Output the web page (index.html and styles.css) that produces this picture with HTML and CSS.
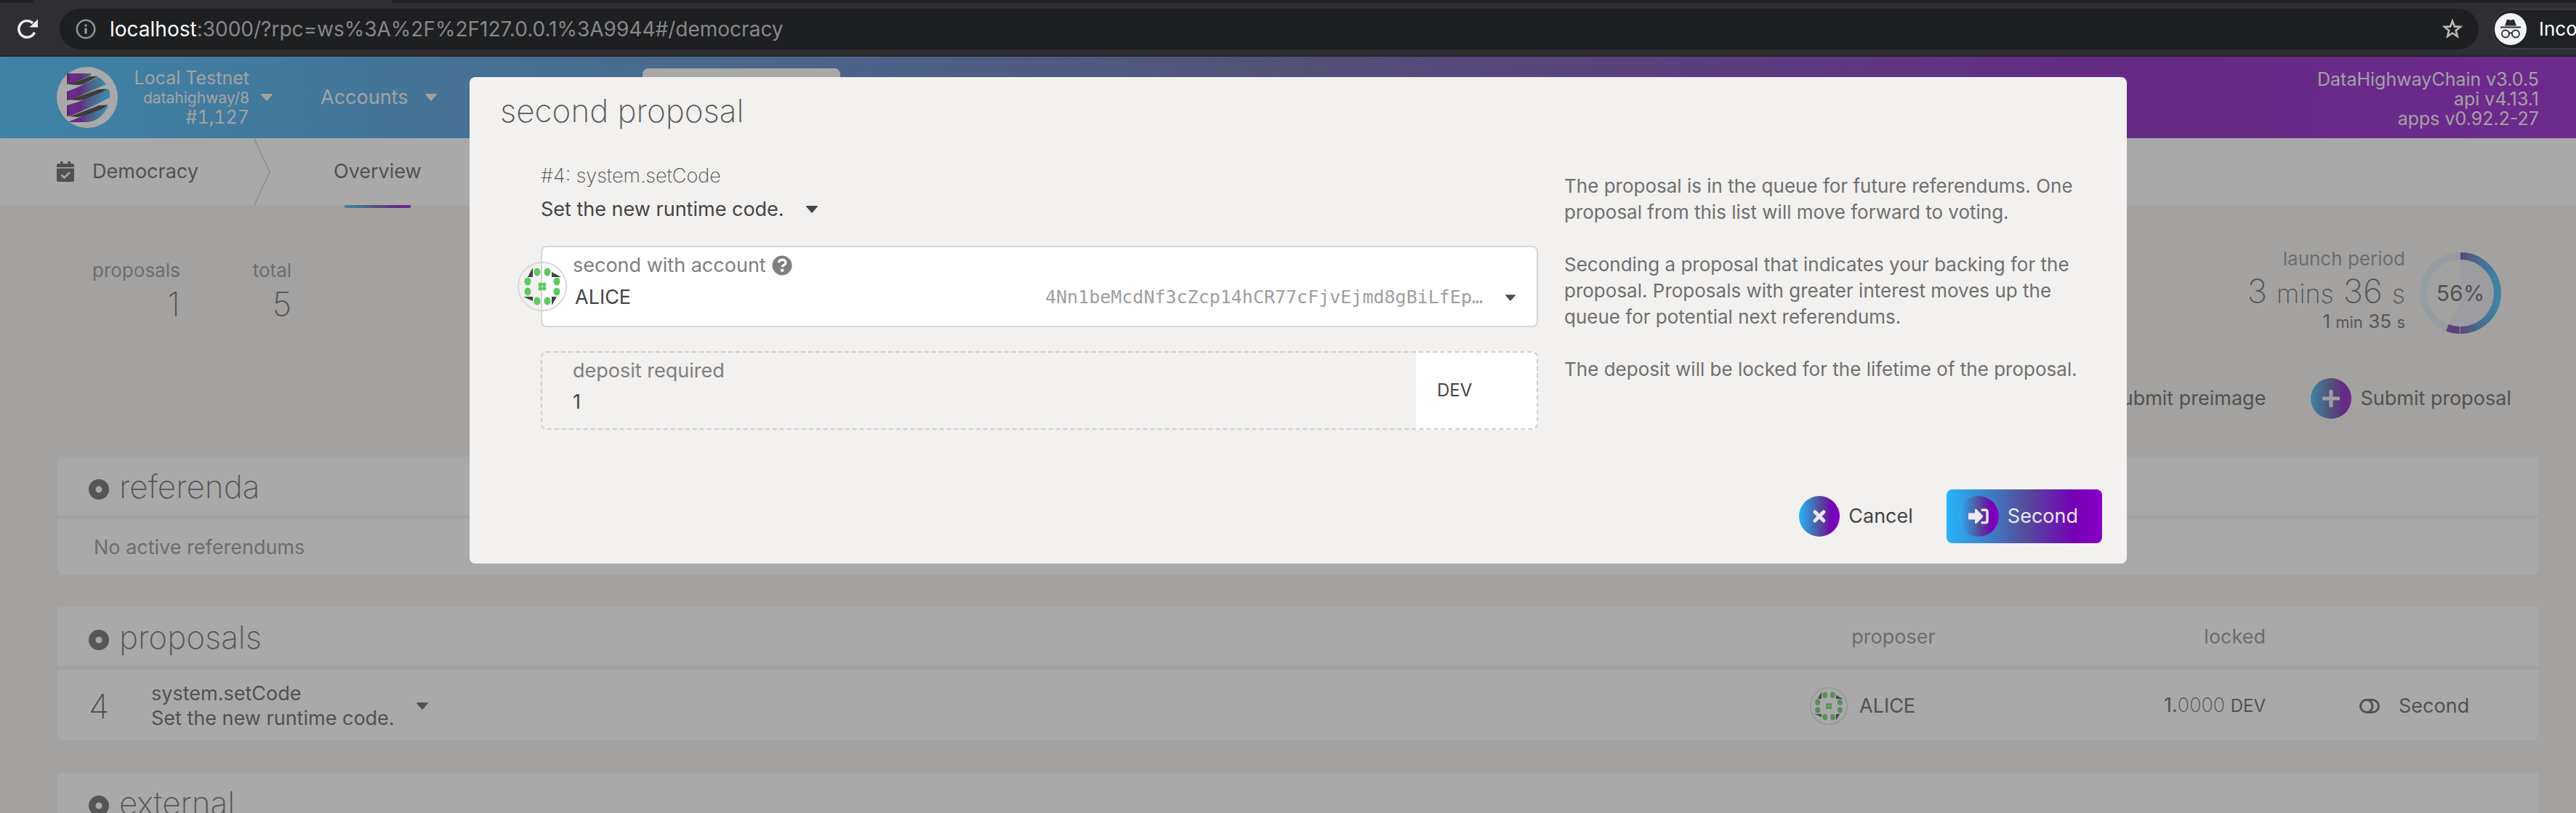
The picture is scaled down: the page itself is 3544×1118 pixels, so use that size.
FILE: index.html
```html
<!DOCTYPE html>
<html lang="en">
<head>
<meta charset="utf-8">
<title>Democracy</title>
<link rel="stylesheet" href="styles.css">
</head>
<body>
<svg class="defs" aria-hidden="true">
  <symbol id="identicon" viewBox="-34 -34 68 68">
    <circle r="33" fill="none" stroke="#d9d8d8" stroke-width="2"/>
    <g fill="#5ec862">
      <ellipse cx="-7" cy="-20" rx="4.500" ry="5.500"/><ellipse cx="7" cy="-20" rx="4.500" ry="5.500"/>
      <ellipse cx="-7" cy="20" rx="4.500" ry="5.500"/><ellipse cx="7" cy="20" rx="4.500" ry="5.500"/>
      <ellipse cx="-20" cy="-7" rx="4.500" ry="5.500"/><ellipse cx="20" cy="-7" rx="4.500" ry="5.500"/>
      <ellipse cx="-20" cy="7" rx="4.500" ry="5.500"/><ellipse cx="20" cy="7" rx="4.500" ry="5.500"/>
      <circle cx="-2.7" cy="-2.7" r="2.8"/><circle cx="2.7" cy="-2.7" r="2.8"/>
      <circle cx="-2.7" cy="2.7" r="2.8"/><circle cx="2.7" cy="2.7" r="2.8"/>
    </g>
    <path fill="#444" d="M-13-26V-13H-20zM13-20L26-13H13zM-26 14H-13V20zM13 14H20L13 26z"/>
  </symbol>
  <symbol id="dot" viewBox="0 0 28 28">
    <path fill="#585858" fill-rule="evenodd" d="M14 0a14 14 0 1 1 0 28a14 14 0 0 1 0-28zM14 9.500a4.500 4.500 0 1 0 0 9a4.500 4.500 0 0 0 0-9z"/>
  </symbol>
  <symbol id="caret" viewBox="0 0 16 10"><path fill="currentColor" d="M1 0H15Q16.500 0 15.500 1.500L9 9Q8 10 7 9L.5 1.500Q-.5 0 1 0z"/></symbol>
</svg>

<div class="browser">
  <div class="tabs"><span class="tab-active"></span></div>
  <div class="toolbar">
    <button class="icon-button reload" aria-label="Reload">
      <svg width="28" height="28" viewBox="0 0 28 28"><path d="M23.500 18.500A11.300 11.300 0 1 1 21 5.800" fill="none" stroke="#f1f3f4" stroke-width="3.400"/><path d="M28 0.500V11.500H16.500z" fill="#f1f3f4"/></svg>
    </button>
    <div class="address">
      <svg width="28" height="28" viewBox="0 0 28 28"><circle cx="14" cy="14" r="12.200" fill="none" stroke="#8d9399" stroke-width="2.600"/><path d="M12.500 7.500h3v3h-3zM12.500 12.500h3v8h-3z" fill="#9aa0a6"/></svg>
      <span class="url"><b>localhost</b>:3000/?rpc=ws%3A%2F%2F127.0.0.1%3A9944#/democracy</span>
      <button class="icon-button" aria-label="Bookmark">
        <svg width="30" height="30" viewBox="0 0 30 30"><path d="M15 3.800l2.900 7.600 8.100.5-6.300 5.100 2.100 8-6.800-4.500-6.800 4.500 2.100-8L4 11.900l8.100-.5z" fill="none" stroke="#b9b9ba" stroke-width="2.600"/></svg>
      </button>
    </div>
    <div class="incognito">
      <svg width="44" height="44" viewBox="0 0 44 44"><circle cx="22" cy="22" r="22" fill="#f1f3f4"/><path d="M17 9h3l2 1 2-1h3l3 8.500H14z" fill="#2b2b2e"/><path d="M8 19.500H36" stroke="#2b2b2e" stroke-width="2"/><g fill="none" stroke="#2b2b2e" stroke-width="1.800"><circle cx="15" cy="28.500" r="5"/><circle cx="29" cy="28.500" r="5"/><path d="M20 28q2-1.500 4 0"/></g></svg>
      <span>Incognito</span>
    </div>
  </div>
</div>

<div class="app">
  <header class="top">
    <a class="chain" href="#chain">
      <svg width="84" height="84" viewBox="0 0 84 84">
        <defs><linearGradient id="lg" gradientUnits="userSpaceOnUse" x1="14" x2="73" y1="0" y2="0"><stop offset="0" stop-color="#5a0070"/><stop offset=".1" stop-color="#8600c6"/><stop offset=".3" stop-color="#7500b5"/><stop offset=".55" stop-color="#4270c0"/><stop offset=".85" stop-color="#2cb0f0"/><stop offset="1" stop-color="#2cb0e8"/></linearGradient></defs>
        <circle cx="42" cy="42" r="42" fill="#fff"/>
        <path fill="url(#lg)" d="M14 9L48 9Q47 12 44 13L22 22 14 24zM14 34L29 28 57 14Q64 18 68 24L50 32 22 44 14 46zM14 53L30 48 60 33 71 30Q74 36 73 42L50 54 22 66 14 68zM17 75L30 70 58 56 71 54Q60 76 39 76L19 76z"/>
        <path fill="#242424" d="M46 13L57 13 36 24 29 25 17 24 18 22 24 21zM57 31L69 30 62 35 36 45 30 46 16 45 24 43zM58 53L71 52 62 58 38 67 30 69 16 68 24 66z"/>
      </svg>
      <span class="chain-text"><span>Local Testnet</span><span class="spec">datahighway/8</span><span class="best">#1,127</span></span>
      <svg class="caret" width="16" height="10"><use href="#caret"/></svg>
    </a>
    <a class="menu" href="#accounts">Accounts <svg class="caret" width="16" height="10"><use href="#caret"/></svg></a>
    <a class="menu-active" href="#network" aria-label="Network"></a>
    <div class="versions"><span>DataHighwayChain v3.0.5</span><span>api v4.13.1</span><span>apps v0.92.2-27</span></div>
  </header>

  <nav class="tabs-row">
    <span class="section">
      <svg width="24" height="28" viewBox="0 0 24 28"><path fill="#4e4e4e" d="M5 0h3.500v3h7V0H19v3h2.500Q24 3 24 5.500V8H0V5.500Q0 3 2.500 3H5zM0 9.500H24V25.500Q24 28 21.500 28H2.500Q0 28 0 25.500z"/><path d="M6.500 18.500l4 4 7.500-7.500" fill="none" stroke="#fff" stroke-width="2.600"/></svg>
      Democracy
    </span>
    <svg width="24" height="92" viewBox="0 0 24 92"><path d="M1 1L22 46.500 1 92" fill="none" stroke="#c8c8c8" stroke-width="1.500"/></svg>
    <a class="tab" href="#overview">Overview</a>
  </nav>

  <main>
    <section class="summary">
      <div class="stat"><span class="label">proposals</span><span class="value">1</span></div>
      <div class="stat"><span class="label">total</span><span class="value">5</span></div>
      <div class="stat launch"><span class="label">launch period</span><span class="value">3 <small>mins</small> 36 <small>s</small></span><span class="remain">1 <small>min</small> 35 <small>s</small></span></div>
      <div class="progress">
        <svg width="112" height="112" viewBox="-56 -56 112 112">
          <defs><linearGradient id="pg" x1="0" x2="1" y1="0" y2="0"><stop offset="0" stop-color="#5f3f98"/><stop offset=".5" stop-color="#3a84cc"/><stop offset="1" stop-color="#2cb0f5"/></linearGradient>
          <linearGradient id="pf" x1="0" x2="1" y1="0" y2="0"><stop offset="0" stop-color="#2cb0f5"/><stop offset="1" stop-color="#8070b8"/></linearGradient></defs>
          <path d="M0-51A51 51 0 0 0 0 51" fill="none" stroke="url(#pf)" stroke-opacity=".14" stroke-width="10"/>
          <path d="M0-46A46 46 0 0 1 0 46L-17 43 0 12z" fill="#6040c0" fill-opacity=".07"/>
          <path d="M0-51A51 51 0 0 1 0 51" fill="none" stroke="url(#pg)" stroke-width="10"/>
          <path d="M-1 51A51 51 0 0 1-18 47.700" fill="none" stroke="#6b2fa0" stroke-width="10"/>
        </svg>
        <span>56%</span>
      </div>
    </section>

    <div class="actions">
      <button class="action"><span class="round"><svg width="24" height="24" viewBox="0 0 24 24"><path d="M12 2V22M2 12H22" stroke="#ece8f3" stroke-width="5" stroke-linecap="round"/></svg></span>Submit preimage</button>
      <button class="action"><span class="round"><svg width="24" height="24" viewBox="0 0 24 24"><path d="M12 2V22M2 12H22" stroke="#ece8f3" stroke-width="5" stroke-linecap="round"/></svg></span>Submit proposal</button>
    </div>

    <table class="list">
      <thead><tr><th class="title"><span><svg width="28" height="28"><use href="#dot"/></svg>referenda</span></th></tr></thead>
      <tbody><tr><td class="empty">No active referendums</td></tr></tbody>
    </table>

    <table class="list">
      <colgroup><col class="c-id"><col><col class="c-who"><col class="c-locked"><col class="c-act"></colgroup>
      <thead><tr><th class="title" colspan="2"><span><svg width="28" height="28"><use href="#dot"/></svg>proposals</span></th><th>proposer</th><th class="right">locked</th><th></th></tr></thead>
      <tbody><tr>
        <td class="id">4</td>
        <td><span class="call"><span>system.setCode<br>Set the new runtime code.</span><svg width="16" height="10"><use href="#caret"/></svg></span></td>
        <td><span class="who"><svg width="52" height="52"><use href="#identicon"/></svg>ALICE</span></td>
        <td class="right">1.<span class="thin">0000</span> <span class="unit">DEV</span></td>
        <td><button class="second"><svg width="28" height="20" viewBox="0 0 28 20"><g fill="none" stroke="#4e4e4e" stroke-width="3"><rect x="1.500" y="1.500" width="25" height="17" rx="8.500"/><path d="M13 2Q18 5 18 10T13 18"/></g></svg>Second</button></td>
      </tr></tbody>
    </table>

    <table class="list">
      <thead><tr><th class="title"><span><svg width="28" height="28"><use href="#dot"/></svg>external</span></th></tr></thead>
    </table>
  </main>

  <div class="dimmer">
    <div class="modal" role="dialog" aria-labelledby="modal-title">
      <h1 id="modal-title">second proposal</h1>
      <div class="columns">
        <div class="form">
          <div class="proposal"><h2>#4: system.setCode</h2><div class="descr">Set the new runtime code. <svg width="16" height="10"><use href="#caret"/></svg></div></div>
          <div class="field account">
            <svg class="avatar" width="68" height="68"><use href="#identicon"/></svg>
            <label for="account">second with account
              <svg width="28" height="28" viewBox="0 0 28 28"><circle cx="14" cy="14" r="13.500" fill="#7f7f7f"/><path d="M8.800 10.200Q10.500 6.200 14.300 6.200 19 6.400 18.800 10.400 18.600 12.600 16 13.800 14.300 14.700 14.200 16.200" fill="none" stroke="#fff" stroke-width="3.200"/><circle cx="14.100" cy="20.800" r="2.400" fill="#fff"/></svg>
            </label>
            <div class="choice">
              <select id="account"><option>ALICE</option></select>
              <span class="hash">4Nn1beMcdNf3cZcp14hCR77cFjvEjmd8gBiLfEp…</span>
              <svg width="14" height="9"><use href="#caret"/></svg>
            </div>
          </div>
          <div class="field deposit">
            <div class="amount"><label for="deposit">deposit required</label><input id="deposit" value="1" readonly></div>
            <select class="si" aria-label="unit"><option>DEV</option></select>
          </div>
        </div>
        <div class="hints">
          <p>The proposal is in the queue for future referendums. One proposal from this list will move forward to voting.</p>
          <p>Seconding a proposal that indicates your backing for the proposal. Proposals with greater interest moves up the queue for potential next referendums.</p>
          <p>The deposit will be locked for the lifetime of the proposal.</p>
        </div>
      </div>
      <div class="buttons">
        <button class="action"><span class="round"><svg width="20" height="20" viewBox="0 0 20 20"><path d="M4 4L16 16M16 4L4 16" stroke="#ece8f3" stroke-width="5" stroke-linecap="round"/></svg></span>Cancel</button>
        <button class="action primary"><span class="round"><svg width="30" height="24" viewBox="0 0 30 24"><path d="M1 8Q1 7.500 2 7.500H10V3Q10.500 1 12 2L20.500 10.500Q22 12 20.500 13.500L12 22Q10.500 23 10 21V16.500H2Q1 16.500 1 15.500z" fill="#ece8f3"/><path d="M20 3.200H24.500Q27 3.200 27 6V18Q27 20.800 24.500 20.800H20" fill="none" stroke="#ece8f3" stroke-width="3.400" stroke-linecap="round"/></svg></span>Second</button>
      </div>
    </div>
  </div>
</div>
</body>
</html>
```

FILE: styles.css
```css
:root {
  --grad: linear-gradient(90deg, #27b4fa 0%, #524f9c 50%, #7500b5 82%, #8800c8 100%);
  --page: #f2f1ef;
  --ink: #4e4e4e;
}

* { box-sizing: border-box; }

body {
  margin: 0;
  overflow: hidden;
  min-height: 100vh;
  display: flex;
  flex-direction: column;
  background: var(--page);
  color: var(--ink);
  font-family: "Inter", "Liberation Sans", sans-serif;
  font-size: 27px;
  line-height: 36px;
}

button, select, input { font: inherit; color: inherit; border: 0; background: none; padding: 0; margin: 0; }
button { cursor: pointer; }
a { color: inherit; text-decoration: none; }
svg { display: block; flex: none; }
.defs { position: absolute; width: 0; height: 0; }

/* browser toolbar */
.browser { background: #2f2e33; border-bottom: 2px solid #272628; }
.tabs { height: 4px; padding-left: 46px; background: #1f2123; }
.tab-active { display: block; width: 494px; height: 4px; background: #2f2e33; }
.toolbar { display: flex; align-items: center; padding: 8px 0 8px 24px; }
.icon-button { display: flex; }
.address {
  flex: 1;
  display: flex;
  align-items: center;
  gap: 19px;
  height: 56px;
  margin: 0 18px 0 30px;
  padding: 0 21px 0 22px;
  border-radius: 28px;
  background: #1e1f21;
}
.url { flex: 1; color: #87878a; font-size: 28px; }
.url b { color: #fff; font-weight: 400; }
.incognito {
  flex: none;
  display: flex;
  align-items: center;
  gap: 17px;
  width: 116px;
  height: 56px;
  padding-left: 2px;
  overflow: hidden;
  border: 2px solid #39393b;
  border-right: 0;
  border-radius: 28px 0 0 28px;
  background: #202124;
  color: #fff;
  font-size: 26px;
}

/* header */
.app { position: relative; flex: 1; }
.top {
  display: flex;
  align-items: center;
  height: 112px;
  padding: 0 51px 0 78px;
  background: var(--grad);
  color: #f3eff0;
}
.chain { display: flex; align-items: center; gap: 16px; }
.chain-text { display: flex; flex-direction: column; width: 165px; text-align: right; font-size: 25px; line-height: 27px; white-space: nowrap; }
.chain-text .spec { font-size: 21px; }
.best { font-variant-numeric: tabular-nums; }
.caret { color: #f3eff0; }
.menu { display: flex; align-items: center; gap: 24px; margin-left: 66px; }
.menu-active { align-self: flex-end; width: 272px; height: 96px; margin-left: 283px; border-radius: 8px 8px 0 0; background: #fff; }
.versions { display: flex; flex-direction: column; margin-left: auto; padding-top: 4px; text-align: right; font-size: 25px; line-height: 27px; }

.tabs-row { display: flex; align-items: center; height: 92px; padding-left: 78px; background: #fff; }
.section { display: flex; align-items: center; gap: 25px; width: 271px; }
.tab { position: relative; margin-left: 86px; line-height: 92px; }
.tab::after { content: ""; position: absolute; left: 15px; right: 15px; bottom: -4px; height: 4px; background: var(--grad); }

/* page */
main { padding: 56px 52px 0 79px; }
.summary { display: flex; height: 170px; padding: 16px 51px 0 48px; }
.stat { display: flex; flex-direction: column; margin-right: 100px; color: #585858; font-size: 26px; text-align: right; }
.stat .label { color: #868686; }
.value { font-size: 46px; font-weight: 200; line-height: 56px; }
.value small { font-size: 36px; }
.launch { margin: -16px 20px 0 auto; }
.launch .value { line-height: 52px; }
.remain { line-height: 24px; }
.remain small { font-size: 22px; }
.progress { display: grid; place-items: center; width: 112px; height: 112px; margin-top: -7px; font-size: 30px; }
.progress > * { grid-area: 1 / 1; }

.actions { display: flex; justify-content: flex-end; gap: 62px; padding: 12px 37px 0 0; margin-bottom: 52px; }
.action { display: flex; align-items: center; gap: 12px; }
.round { display: grid; place-items: center; width: 56px; height: 56px; border-radius: 50%; background: var(--grad); }

.list { width: 100%; margin-bottom: 45px; border-collapse: separate; border-spacing: 0; table-layout: fixed; }
.list:last-child { margin-bottom: 0; }
.list th { height: 80px; padding: 2px 0 0; background: #fff; color: #868686; font-weight: 400; }
.list td { height: 82px; padding: 2px 0 0; background: #fff; border-top: 6px solid #f1f0ee; }
.list td:first-child { border-bottom-left-radius: 8px; }
.list td:last-child { border-bottom-right-radius: 8px; }
.list .title { padding-left: 43px; text-align: left; }
.title span { display: flex; align-items: center; gap: 14px; color: #585858; font-size: 44px; font-weight: 200; line-height: 56px; }
.title svg { margin-top: 8px; }
.list .empty { padding-left: 50px; color: #868686; }
.c-id { width: 129px; }
.c-who { width: 230px; }
.c-locked { width: 397px; }
.c-act { width: 375px; }
.list .id { height: 103px; padding-left: 43px; font-size: 46px; font-weight: 200; }
.call { display: flex; align-items: center; gap: 30px; line-height: 34px; }
.who { display: flex; align-items: center; gap: 16px; }
.list .right { text-align: right; }
.thin { font-weight: 200; }
.unit { font-size: 24px; }
.second { display: flex; align-items: center; gap: 26px; margin-left: 129px; }

/* dialog */
.dimmer { position: absolute; inset: 0; padding: 28px 618px 0 646px; background: rgba(84, 84, 84, .5); }
.modal { padding: 18px 34px 28px 42px; border-radius: 8px; background: var(--page); }
.modal h1 { margin: 0; color: #585858; font-size: 44px; font-weight: 200; line-height: 56px; }
.columns { display: grid; grid-template-columns: 1372px 1fr; gap: 36px; padding: 44px 0 0 56px; }
.proposal h2 { margin: 0; font-size: 27px; font-weight: 200; line-height: 36px; }
.descr { display: flex; align-items: center; gap: 30px; margin: 10px 0 32px; color: #444; line-height: 36px; }
.field { position: relative; border: 2px solid #d9d8d8; border-radius: 8px; }
.field label { color: #7f7f7f; line-height: 34px; }
.field select, .field input { appearance: none; color: #444; outline: 0; }
.account { height: 112px; padding: 8px 29px 0 42px; background: #fff; }
.account label { display: flex; align-items: center; gap: 8px; }
.avatar { position: absolute; left: -34px; top: 20px; }
.choice { display: flex; align-items: center; height: 54px; }
.choice select { flex: 1; padding-left: 3px; }
.hash { margin-right: 31px; color: #9f9f9f; font-family: "DejaVu Sans Mono", monospace; font-size: 25px; }
.deposit { display: flex; height: 108px; margin-top: 33px; border-style: dashed; border-color: #d0cfcf; background: linear-gradient(90deg, transparent 0 calc(100% - 168px), #fff calc(100% - 168px)) border-box; }
.amount { display: flex; flex-direction: column; flex: 1; padding: 8px 0 0 42px; }
.amount input { height: 50px; }
.deposit .si { width: 166px; padding-left: 29px; font-size: 24px; }
.hints { padding-top: 14px; color: #6f6f6f; font-size: 26px; }
.hints p { margin: 0 0 36px; }
.buttons { display: flex; justify-content: flex-end; gap: 46px; margin-top: 48px; padding-top: 34px; color: #444; }
.primary { height: 74px; padding: 0 33px 0 16px; border-radius: 8px; background: var(--grad); color: #ece8f3; }
```
